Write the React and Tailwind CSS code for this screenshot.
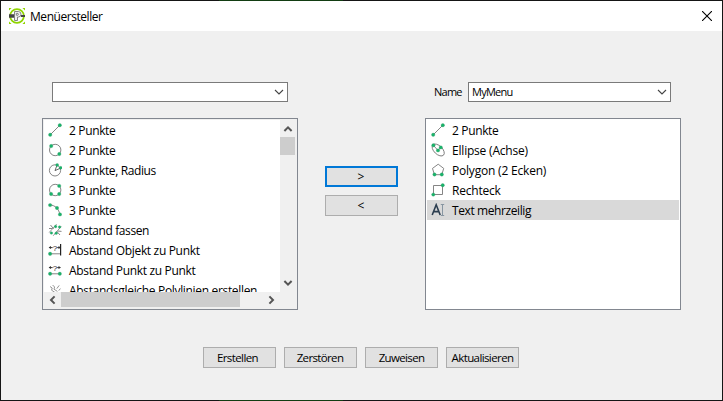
import React from "react";

const G = "#18b46a";

function Dots({ pts, r = 1.7 }) {
  return pts.map(([x, y], i) => <circle key={i} cx={x} cy={y} r={r} fill={G} stroke="#3a9468" strokeWidth="0.3" />);
}

function Glyph({ kind }) {
  const line = { fill: "none", stroke: "#777", strokeWidth: 0.9 };
  return (
    <svg width="14" height="14" viewBox="0 0 14 14" className="shrink-0">
      {kind === "line" && (<><path d="M2 12L12 2" {...line} /><Dots pts={[[2.2, 11.8], [11.8, 2.2]]} /></>)}
      {kind === "circle2" && (<><circle cx="7.2" cy="7" r="5.7" {...line} /><Dots pts={[[3.2, 3], [11.3, 11]]} /></>)}
      {kind === "radius" && (<><circle cx="7" cy="7.4" r="5.6" {...line} /><path d="M7 7.6L9 2.2M7 7.6L12.4 5.2" {...line} stroke="#555" /><Dots pts={[[9.2, 1.9], [12.6, 4.8]]} r={1.5} /></>)}
      {kind === "circle3" && (<><circle cx="7.2" cy="7" r="5.7" {...line} /><Dots pts={[[11.2, 2.9], [3.1, 11], [11.2, 11]]} /></>)}
      {kind === "arc" && (<><path d="M2 2C7 2 11 6 12 12" {...line} /><Dots pts={[[2.1, 2.1], [9, 5], [12, 11.4]]} /></>)}
      {kind === "snap" && (
        <>
          <path d="M2.5 2L5.6 5.8M8.6 8.2L12 12M1 5.5H4.5M9.6 8L13.5 8.4" {...line} />
          <path d="M1.2 9.5L8.6 1.2M5.2 12.8L13.2 3.4" {...line} stroke="#8a8a8a" />
          <Dots pts={[[7.6, 3.6], [11.6, 4], [3.4, 10], [8.2, 10.2]]} r={1.3} />
        </>
      )}
      {(kind === "distObj" || kind === "distPt") && (
        <>
          <path d="M1.5 4.6H4.6M9.2 4.6H12.2" fill="none" stroke="#333" strokeWidth="1" />
          <path d="M0.6 4.6L3 3.1V6.1ZM12.9 4.6L10.5 3.1V6.1Z" fill="#333" />
          <text x="4.7" y="7.6" fontSize="8" fill="#222" fontFamily="Liberation Sans, sans-serif">?</text>
          <path d="M2 10.8H12" {...line} />
          {kind === "distObj" ? <path d="M12.6 1V12.5" stroke="#222" strokeWidth="1.2" /> : null}
          <Dots pts={kind === "distObj" ? [[2.1, 10.8]] : [[2.1, 10.8], [11.8, 10.8]]} />
        </>
      )}
      {kind === "poly" && (
        <path d="M2 3.5L4.2 5L3.6 7.2L7 9.5M4.6 2L6.6 4L6 6.2L9.4 8.4M11.2 2.4L8.8 5.6M12.4 5.6L10.8 7.6" fill="none" stroke="#8a8a8a" strokeWidth="0.9" />
      )}
      {kind === "ellipse" && (<><ellipse cx="7.2" cy="7" rx="7.4" ry="4.2" transform="rotate(44 7.2 7)" {...line} /><path d="M2.4 2.4L7 7.4L10 4.2" {...line} /><Dots pts={[[2.4, 2.3], [7, 7.4], [9.8, 4.4]]} /></>)}
      {kind === "pentagon" && (<><path d="M7.2 1.2L12.7 5.4L10.8 11.7H3.4L1.5 5.4Z" {...line} /><Dots pts={[[3.5, 11.5], [10.8, 11.5]]} /></>)}
      {kind === "rect" && (<><path d="M2.5 2.5H11.5V11.5H2.5Z" {...line} /><Dots pts={[[11.7, 2.2], [2.3, 11.6]]} /></>)}
      {kind === "text" && (<><path d="M1.2 12L5.2 1.8L9.2 12M2.7 8.6H7.8" fill="none" stroke="#2c3e50" strokeWidth="1.6" /><path d="M9.8 1.5H13.2M11.5 1.5V12.5M9.8 12.5H13.2" fill="none" stroke="#8795a1" /></>)}
    </svg>
  );
}

function Row({ kind, label, selected, spacing }) {
  return (
    <li className={`flex h-5 shrink-0 items-center gap-[7px] pl-1 ${selected ? "bg-[#d9d9d9]" : ""}`}>
      <Glyph kind={kind} />
      <span className={`whitespace-nowrap pt-0.5 leading-5 ${spacing}`}>{label}</span>
    </li>
  );
}

function Chevron({ dir, thin }) {
  const d = { down: "M1 3L5 7L9 3", up: "M1.4 7L5 3.4L8.6 7", left: "M6.6 1.4L3 5L6.6 8.6", right: "M3.4 1.4L7 5L3.4 8.6" }[dir];
  return (
    <svg width="10" height="10" viewBox="0 0 10 10" className="shrink-0">
      <path d={!thin && dir === "down" ? "M1.4 3L5 6.6L8.6 3" : d} fill="none" stroke={thin ? "#444" : "#555"} strokeWidth={thin ? 1.1 : 2} />
    </svg>
  );
}

function Combo({ value, className }) {
  return (
    <div className={`flex h-5 items-center justify-between border border-[#7a7a7a] bg-white pl-[3px] pr-[3px] text-[11px] ${className}`}>
      <span className="pt-px tracking-[-0.75px]">{value}</span>
      <Chevron dir="down" thin />
    </div>
  );
}

function Action({ children, spacing = "" }) {
  return (
    <button className={`flex h-[21px] w-[73px] items-center justify-center border border-[#adadad] bg-[#e1e1e1] text-[11.5px] leading-none ${spacing}`}>
      {children}
    </button>
  );
}

const available = [
  ["line", "2 Punkte", "tracking-[-0.35px]"],
  ["circle2", "2 Punkte", "tracking-[-0.35px]"],
  ["radius", "2 Punkte, Radius", "tracking-[-0.38px]"],
  ["circle3", "3 Punkte", "tracking-[-0.35px]"],
  ["arc", "3 Punkte", "tracking-[-0.35px]"],
  ["snap", "Abstand fassen", "tracking-[-0.4px]"],
  ["distObj", "Abstand Objekt zu Punkt", "tracking-[-0.33px]"],
  ["distPt", "Abstand Punkt zu Punkt", "tracking-[-0.33px]"],
  ["poly", "Abstandsgleiche Polylinien erstellen", "tracking-[-0.33px]"],
];

const chosen = [
  ["line", "2 Punkte", "tracking-[-0.35px]"],
  ["ellipse", "Ellipse (Achse)", "tracking-[-0.2px]"],
  ["pentagon", "Polygon (2 Ecken)", "tracking-[-0.2px]"],
  ["rect", "Rechteck", "tracking-[-0.2px]"],
  ["text", "Text mehrzeilig", "tracking-[-0.4px]"],
];

function Logo() {
  return (
    <svg width="16" height="16" viewBox="0 0 16 16" className="shrink-0">
      <path d="M0 0h2.6L0 2.6zM16 0h-2.6l2.6 2.6zM0 16h2.6l-2.6-2.6zM16 16h-2.6l2.6-2.6z" fill="#8fd400" />
      <circle cx="8" cy="8" r="6.9" fill="#fff" stroke="#8fd400" strokeWidth="1.7" />
      <path d="M0 6.3h5v3.4H0zM12 7h4v2h-4z" fill="#444" />
      <path d="M5.5 3.5H9.5Q12 3.7 12 6.3T9.5 9H8.5V12.5H5.5ZM7.3 5.4V7.2H9Q10 6.3 9 5.4Z" fill="#eee" stroke="#777" strokeWidth="0.9" />
    </svg>
  );
}

export default function App() {
  return (
    <div className="flex h-[401px] w-[723px] flex-col overflow-hidden bg-[#f0f0f0] font-['Open_Sans','Noto_Sans',sans-serif] text-xs text-black">
      <div className="flex h-px shrink-0 bg-[#151515] pl-[219px]"><div className="w-[124px] bg-[#123d12]" /></div>
      <div className="flex min-h-0 flex-1 flex-col border-x border-[#151515]">
        <header className="flex h-[30px] shrink-0 items-center bg-white pl-2 pr-[10px]">
          <Logo />
          <h1 className="ml-[5px] flex-1 pt-px tracking-[-0.45px]">Menüersteller</h1>
          <svg width="10" height="10" viewBox="0 0 10 10"><path d="M0 0L10 10M10 0L0 10" stroke="#000" strokeWidth="1.1" /></svg>
        </header>
        <main className="flex pl-[41px] pt-[51px]">
          <section className="w-[256px]">
            <Combo value="" className="ml-[10px] w-[236px]" />
            <div className="mt-4 h-[192px] border border-[#828790] p-px pr-0">
              <div className="flex h-[172px]">
                <ul className="flex w-[236px] flex-col overflow-hidden bg-white">
                  {available.map(([k, t, s], i) => <Row key={i} kind={k} label={t} spacing={s} />)}
                </ul>
                <div className="flex w-[15px] flex-col items-center">
                  <div className="flex h-[17px] items-center"><Chevron dir="up" /></div>
                  <div className="h-[18px] w-full bg-[#cdcdcd]" />
                  <div className="mt-auto flex h-[18px] items-center"><Chevron dir="down" /></div>
                </div>
              </div>
              <div className="flex h-[15px] items-center">
                <div className="flex w-[17px] justify-center"><Chevron dir="left" /></div>
                <div className="h-full w-[179px] bg-[#cdcdcd]" />
                <div className="ml-[26px]"><Chevron dir="right" /></div>
              </div>
            </div>
          </section>
          <div className="ml-[27px] mt-[84px] flex w-[73px] flex-col gap-2">
            <button className="flex h-[21px] items-center justify-center border-2 border-[#0078d7] bg-[#e1e1e1] pt-px pr-px leading-none">&gt;</button>
            <button className="flex h-[21px] items-center justify-center border border-[#adadad] bg-[#e1e1e1] pt-px pr-px leading-none">&lt;</button>
          </div>
          <section className="ml-[27px] w-[256px]">
            <div className="flex items-center pl-[9px]">
              <label className="w-[34px] pt-px text-[11px] tracking-[-0.75px]">Name</label>
              <Combo value="MyMenu" className="w-[203px]" />
            </div>
            <ul className="mt-4 h-[192px] border border-[#828790] bg-white p-px">
              {chosen.map(([k, t, s], i) => <Row key={i} kind={k} label={t} spacing={s} selected={i === 4} />)}
            </ul>
          </section>
        </main>
        <footer className="flex gap-2 pl-[202px] pt-[37px]">
          <Action spacing="pr-1 tracking-[-0.6px]">Erstellen</Action>
          <Action spacing="pr-px tracking-[-0.65px]">Zerstören</Action>
          <Action spacing="tracking-[-0.65px]">Zuweisen</Action>
          <Action spacing="tracking-[-0.6px]">Aktualisieren</Action>
        </footer>
      </div>
      <div className="flex h-px shrink-0 bg-[#151515] pl-[219px]"><div className="w-[124px] bg-[#123d12]" /></div>
    </div>
  );
}
